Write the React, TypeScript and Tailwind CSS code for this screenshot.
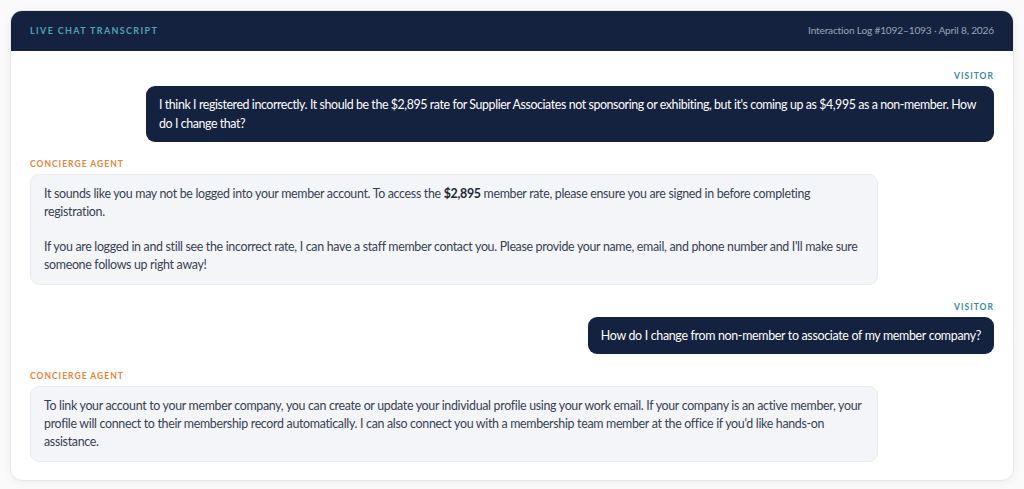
import React from "react";

type Msg = { from: "visitor" | "agent"; body: React.ReactNode };

const messages: Msg[] = [
  {
    from: "visitor",
    body: (
      <p className="tracking-[-0.033em]">
        I think I registered incorrectly. It should be the $2,895 rate for Supplier Associates not sponsoring or
        exhibiting, but it's coming up as $4,995 as a non-member. How do I change that?
      </p>
    ),
  },
  {
    from: "agent",
    body: (
      <>
        <p>
          It sounds like you may not be logged into your member account. To access the{" "}
          <strong className="font-bold text-[#1f2937]">$2,895</strong> member rate, please ensure you are signed in
          before completing registration.
        </p>
        <p className="mt-[17px]">
          If you are logged in and still see the incorrect rate, I can have a staff member contact you. Please provide
          your name, email, and phone number and I'll make sure someone follows up right away!
        </p>
      </>
    ),
  },
  {
    from: "visitor",
    body: <p>How do I change from non-member to associate of my member company?</p>,
  },
  {
    from: "agent",
    body: (
      <p>
        To link your account to your member company, you can create or update your individual profile using your work
        email. If your company is an active member, your profile will connect to their membership record
        automatically. I can also connect you with a membership team member at the office if you'd like hands-on
        assistance.
      </p>
    ),
  },
];

function Bubble({ msg }: { msg: Msg }) {
  const visitor = msg.from === "visitor";
  return (
    <div className={visitor ? "flex flex-col items-end" : "flex flex-col items-start"}>
      <span
        className={
          visitor
            ? "mb-[3px] text-[8.5px] leading-[13px] font-bold uppercase tracking-[0.12em] text-[#3d8a99]"
            : "mb-[3px] text-[8.5px] leading-[13px] font-bold uppercase tracking-[0.12em] text-[#e8833a]"
        }
      >
        {visitor ? "Visitor" : "Concierge Agent"}
      </span>
      <div
        className={
          visitor
            ? "max-w-[848px] rounded-[9px] bg-[#15223f] px-[13px] py-[9px] text-[12.4px] leading-[19px] tracking-[-0.025em] text-white"
            : "max-w-[848px] rounded-[9px] border border-[#e8ebf0] bg-[#f4f5f9] px-[13px] py-[10px] text-[12.4px] leading-[18px] tracking-[-0.025em] text-[#374151]"
        }
      >
        {msg.body}
      </div>
    </div>
  );
}

export default function App() {
  return (
    <div className="min-h-[489px] bg-[#fafafa] p-[10px] font-['Lato','Liberation_Sans',sans-serif]">
      <div className="overflow-hidden rounded-[12px] border border-[#e5e7eb] bg-white shadow-[0_2px_8px_rgba(0,0,0,0.05)]">
        <header className="flex h-[40px] items-center justify-between bg-[#15223f] px-[19px]">
          <h1 className="text-[9px] font-bold uppercase tracking-[0.15em] text-[#4ea3b5]">Live Chat Transcript</h1>
          <span className="text-[10.2px] tracking-[-0.02em] text-[#9aa3b5]">
            Interaction Log #1092–1093 · April 8, 2026
          </span>
        </header>
        <div className="flex flex-col gap-[16px] px-[19px] pb-[18px] pt-[19px]">
          {messages.map((m, i) => (
            <Bubble key={i} msg={m} />
          ))}
        </div>
      </div>
    </div>
  );
}
